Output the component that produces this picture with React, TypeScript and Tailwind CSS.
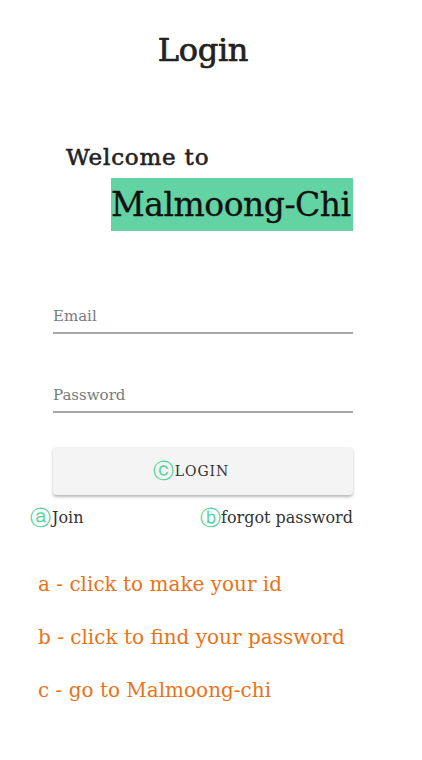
const serif = { fontFamily: '"DejaVu Serif", "Liberation Serif", serif' };

const Circle = ({ ch }: { ch: string }) => (
  <span className="text-[#52d19e] text-[21px] leading-none" style={{ fontFamily: '"DejaVu Sans", sans-serif' }}>
    {ch}
  </span>
);

export default function App() {
  return (
    <div className="w-[422px] min-h-[760px] bg-white text-[#222]" style={serif}>
      <h1 className="pt-[30px] text-center text-[32px] leading-[40px] tracking-[-0.3px] pr-[16px] [-webkit-text-stroke:0.7px_#222]">Login</h1>

      <div className="mt-[73px] pl-[66px] text-[23px] leading-[28px] tracking-[0.8px] [-webkit-text-stroke:0.6px_#222]">Welcome to</div>
      <div className="ml-[111px] mt-[7px] w-[242px] h-[53px] bg-[#63d3a3] flex items-center text-[#111] text-[33px] tracking-[-0.5px] whitespace-nowrap [-webkit-text-stroke:0.3px_#111]">
        Malmoong-Chi
      </div>

      <div className="ml-[53px] w-[300px] mt-[75px]">
        <div className="border-b-2 border-[#a8a8a8] h-[28px] text-[15px] text-[#7a7a7a] leading-[20px]">Email</div>
        <div className="mt-[51px] border-b-2 border-[#a8a8a8] h-[28px] text-[15px] text-[#7a7a7a] leading-[20px]">Password</div>

        <button className="mt-[34px] w-full h-[48px] rounded bg-[#f4f4f4] shadow-[0_2px_3px_rgba(0,0,0,0.28)] flex items-center justify-center pr-[24px] text-[14px] tracking-[1px] text-[#333]">
          <Circle ch="ⓒ" />
          LOGIN
        </button>
      </div>

      <div className="ml-[30px] w-[323px] mt-[11px] flex justify-between items-center text-[16px] text-[#333]">
        <span className="flex items-center">
          <Circle ch="ⓐ" />
          <span className="ml-[1px]">Join</span>
        </span>
        <span className="flex items-center">
          <Circle ch="ⓑ" />
          forgot password
        </span>
      </div>

      <div className="pl-[38px] mt-[40px] flex flex-col gap-[25px] text-[20px] leading-[28px] text-[#e8731a]">
        <p>a - click to make your id</p>
        <p>b - click to find your password</p>
        <p>c - go to Malmoong-chi</p>
      </div>
    </div>
  );
}
